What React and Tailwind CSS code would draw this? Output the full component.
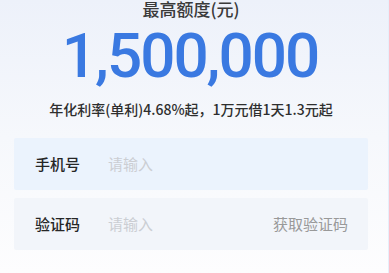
export default function App() {
  return (
    <div
      className="w-[389px] h-[273px] overflow-hidden bg-gradient-to-b from-[#edf1fa] via-[#f6f8fc] to-[#fdfdfe] flex"
      style={{ fontFamily: '"Noto Sans CJK SC", "Noto Sans", sans-serif' }}
    >
      <div className="w-[382px] flex flex-col items-center">
        <div className="h-[18px] leading-[18px] text-[17px] text-[#3a3a3a] font-medium">
          最高额度(元)
        </div>
        <div
          className="mt-[10px] h-[56px] leading-[56px] text-[62px] font-medium text-[#3a79e1] tracking-[-2px] pr-[2px]"
          style={{ fontFamily: 'Roboto, "Noto Sans", sans-serif' }}
        >
          1,500,000
        </div>
        <div className="mt-[15px] h-[20px] leading-[20px] text-[14px] font-medium text-[#2e2e2e]">
          年化利率(单利)4.68%起，1万元借1天1.3元起
        </div>
        <div className="mt-[19px] w-[354px] h-[52px] rounded-[2px] bg-[#ebf3fd] flex items-center pl-[21px] pr-[20px] text-[15px]">
          <span className="w-[73px] text-[#262626] font-medium">手机号</span>
          <span className="text-[#cbced3]">请输入</span>
        </div>
        <div className="mt-[8px] w-[354px] h-[52px] rounded-[2px] bg-[#f2f5fa] flex items-center pl-[21px] pr-[20px] text-[15px]">
          <span className="w-[73px] text-[#262626] font-medium">验证码</span>
          <span className="text-[#cbced3]">请输入</span>
          <span className="ml-auto text-[#999999]">获取验证码</span>
        </div>
      </div>
      <div className="flex-1 border-r border-[#e6eefa]" />
    </div>
  );
}
